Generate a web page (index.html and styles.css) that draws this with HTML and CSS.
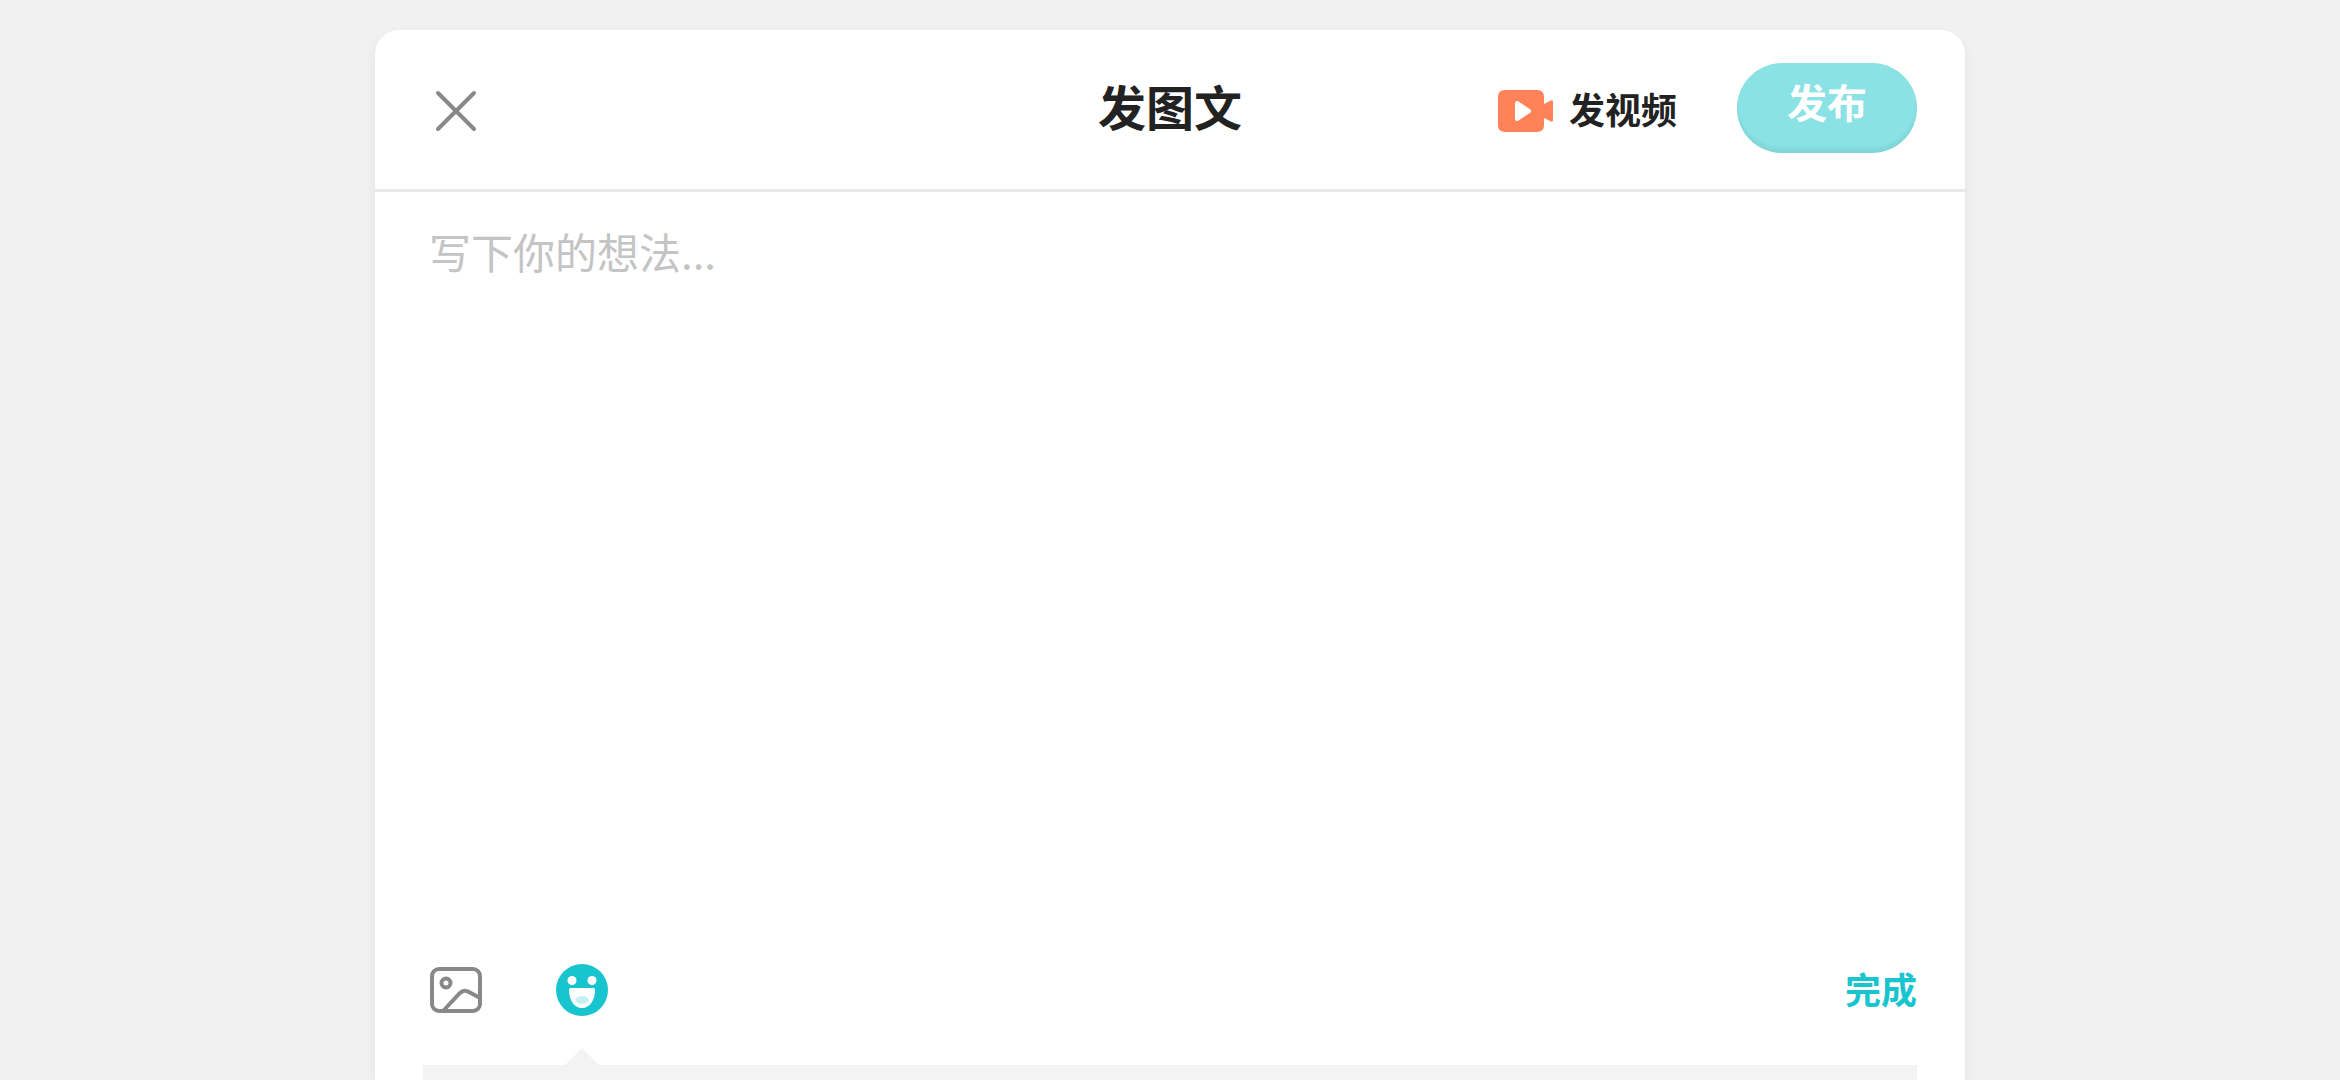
FILE: index.html
```
<!DOCTYPE html>
<html lang="zh-CN">
<head>
	<meta charset="UTF-8" />
	<meta name="viewport" content="width=device-width, initial-scale=1.0" />
	<title>发图文</title>
	<link rel="stylesheet" href="styles.css">
</head>
<body>
	<main class="editor">
		<header class="editor-header">
			<button type="button" class="bt-icon bt-close" aria-label="关闭">
				<svg viewBox="0 0 42 42" width="42" height="42" fill="none" stroke="#888" stroke-width="4" stroke-linecap="round">
					<path d="M3 3L39 39M39 3L3 39"/>
				</svg>
			</button>
			<h1 class="editor-title">发图文</h1>
			<div class="editor-actions">
				<a href="#" class="link-video">
					<svg viewBox="0 0 56 42" width="56" height="42">
						<path d="M7 0H39Q46 0 46 7V14L52 11Q55 9 55 12V30Q55 33 52 31L46 28V35Q46 42 39 42H7Q0 42 0 35V7Q0 0 7 0Z" fill="#ff8259"/>
						<path d="M19 13V29L31 21Z" fill="#fff" stroke="#fff" stroke-width="4" stroke-linejoin="round"/>
					</svg>
					发视频
				</a>
				<button type="button" class="bt-publish">发布</button>
			</div>
		</header>

		<textarea class="editor-text" placeholder="写下你的想法..." aria-label="写下你的想法"></textarea>

		<div class="toolbar">
			<button type="button" class="bt-icon" aria-label="图片">
				<svg viewBox="0 0 52 46" width="52" height="46" fill="none" stroke="#888" stroke-width="4">
					<rect x="2" y="2" width="48" height="42" rx="7"/>
					<circle cx="16" cy="16" r="4.500"/>
					<path d="M14 43L30 26Q34 22 39 25L50 31"/>
				</svg>
			</button>
			<button type="button" class="bt-icon bt-emoji" aria-label="表情">
				<svg viewBox="0 0 52 52" width="52" height="52">
					<circle cx="26" cy="26" r="26" fill="#18c5ce"/>
					<circle cx="16" cy="16.500" r="4.500" fill="#fff"/>
					<circle cx="36" cy="16.500" r="4.500" fill="#fff"/>
					<path d="M14.500 24H37.500Q39 24 39 26C39 36 34 44 26 44S13 36 13 26Q13 24 14.500 24Z" fill="#fff"/>
					<ellipse cx="26" cy="36" rx="6.500" ry="4" fill="#c5f1f3"/>
				</svg>
			</button>
			<button type="button" class="bt-done">完成</button>
		</div>
		<div class="emoji-panel"></div>
	</main>
</body>
</html>
```

FILE: styles.css
```
*{
	box-sizing: border-box;
}
body{
	display: flex;
	justify-content: center;
	height: 100vh;
	margin: 0;
	padding-top: 30px;
	background: #f1f1f1;
	color: #222;
	font-family: "Noto Sans CJK SC", sans-serif;
	overflow: hidden;
}
button{
	margin: 0;
	padding: 0;
	border: 0;
	background: none;
	font-family: inherit;
	cursor: pointer;
}
svg{
	display: block;
	flex: none;
}
.editor{
	display: flex;
	flex-direction: column;
	width: 68%;
	max-width: 1590px;
	border-radius: 24px 24px 0 0;
	background: #fff;
	box-shadow: 0 4px 12px rgba(0, 0, 0, .06);
}
.editor-header{
	display: grid;
	grid-template-columns: 1fr auto 1fr;
	align-items: center;
	padding: 33px 48px 36px;
	border-bottom: 3px solid #e9e9e9;
}
.bt-icon{
	display: flex;
	align-items: center;
	justify-content: center;
	width: 66px;
	height: 66px;
}
.bt-close{
	padding-top: 6px;
}
.editor-title{
	margin: 0;
	padding-bottom: 6px;
	font-size: 48px;
	font-weight: 700;
	line-height: 72px;
}
.editor-actions{
	display: flex;
	align-items: center;
	justify-content: flex-end;
	gap: 60px;
}
.link-video{
	display: flex;
	align-items: center;
	gap: 15px;
	color: inherit;
	font-size: 36px;
	font-weight: 700;
	line-height: 54px;
	text-decoration: none;
}
.link-video svg{
	margin-top: 6px;
}
.bt-publish{
	width: 180px;
	height: 90px;
	padding-bottom: 14px;
	border-radius: 45px;
	background: #8ae2e5;
	box-shadow: inset 0 -5px 3px #82d6d9;
	color: #fff;
	font-size: 40px;
	font-weight: 700;
}
.editor-text{
	flex: 1;
	width: 100%;
	padding: 27px 54px;
	border: 0;
	outline: 0;
	background: none;
	color: inherit;
	font-family: inherit;
	font-size: 42px;
	line-height: 63px;
	resize: none;
}
.editor-text::placeholder{
	color: #c4c4c4;
}
.toolbar{
	display: flex;
	align-items: center;
	gap: 60px;
	padding: 0 48px 42px;
}
.bt-emoji{
	position: relative;
}
/* arrow of the emoji panel */
.bt-emoji::after{
	content: "";
	position: absolute;
	top: 91px;
	left: 15px;
	border: 18px solid transparent;
	border-top: 0;
	border-bottom-color: #f3f3f3;
}
.bt-done{
	margin-left: auto;
	padding-bottom: 4px;
	color: #18c5ce;
	font-size: 36px;
	font-weight: 700;
	line-height: 54px;
}
.emoji-panel{
	height: 15px;
	margin: 0 48px;
	background: #f3f3f3;
}
```
